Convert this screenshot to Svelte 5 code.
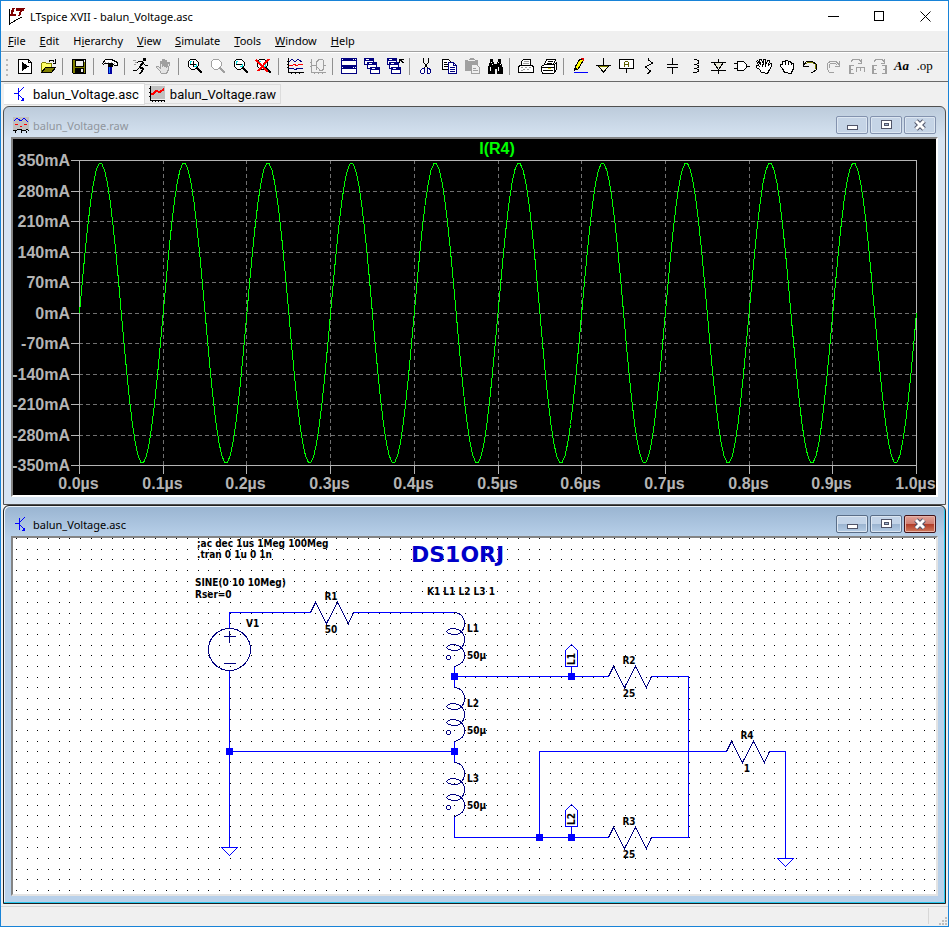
<script lang="ts">
	interface Shape {
		d: string;
		fill?: string;
		stroke?: string;
		width?: number;
	}

	interface Tool {
		name: string;
		shapes?: Shape[];
		text?: string;
		disabled?: boolean;
	}

	const K = '#000';
	const G = '#a0a0a0';
	const N = '#000080';

	const line = (d: string, stroke = K, width = 1): Shape => ({ d, stroke, width });
	const area = (d: string, fill: string, stroke = 'none'): Shape => ({ d, fill, stroke });

	const lens = (color: string, glass: string): Shape[] => [
		area('M6 3h4l3 3v4l-3 3h-4l-3-3v-4z', '#fff', color),
		area('M5 5h2v1h-1v2h-1zM9 10h2v-2h1v3h-3z', glass),
		line('M12 12l5 5', color, 2)
	];

	const childWindow = (x: number, y: number): Shape[] => [
		area(`M${x}.5 ${y}.5h9v6h-9z`, '#fff', N),
		area(`M${x} ${y}h10v3h-10z`, N),
		area(`M${x + 2} ${y + 1}h3v1h-3z`, '#fff')
	];

	const toolGroups: Tool[][] = [
		[
			{
				name: 'New schematic',
				shapes: [area('M3.5 3.5h10l3 3v11h-13z', '#fff', K), line('M13.5 3.5v3h3'), area('M7 6l7 4.5-7 4.5z', K)]
			},
			{
				name: 'Open',
				shapes: [
					area('M3.5 16.5v-9l1-1h3l1 1h5v4', '#ffff66', '#808000'),
					area('M3.5 16.5l4-5h10l-4 5z', '#808000', K),
					line('M11 5.5l1-1h3l1.5 2M17.5 3v4h-3')
				]
			}
		],
		[
			{
				name: 'Save',
				shapes: [
					area('M3.5 3.5h13v14h-12l-1-1z', '#808000', K),
					area('M6 4h8v6h-8z', '#efefef', K),
					area('M6 12h9v5h-9z', K),
					area('M12 13h2v3h-2zM15 4h1v2h-1z', '#efefef')
				]
			}
		],
		[
			{
				name: 'Control panel',
				shapes: [
					area('M2.5 7.5l3-4h6l6 3v3h-3l-2-2h-8l-1 1z', '#fff', K),
					area('M5 6h1v1h-1zM8 6h1v1h-1zM11 6h1v1h-1zM14 7h1v1h-1z', G),
					area('M8 8h5v3h-5z', K),
					area('M8 11h4v7h-4z', '#0000a0'),
					line('M9.5 11v6', '#1080ff')
				]
			}
		],
		[
			{
				name: 'Run',
				shapes: [
					area('M12 2h3v3h-3z', K),
					line('M12 6l-3 5 3 2-2 4', K, 2),
					line('M12 6l-4-1-2 2M12 7l2 2h3M9 11l-3 3h-4M10 17h-2'),
					line('M2 4.5h3M4 6.5h2M3 8.5h2', G)
				]
			},
			{
				name: 'Halt',
				disabled: true,
				shapes: [
					area('M7.5 17.5l-2-3-3-3v-1h2l2 2v-7h1l1 5v-7h2v7l1-6h1v7l2-5h1l-1 7-2 4z', '#e4e4e4', G),
					line('M9.5 4v6M11.5 5v6M13.5 6v5', G)
				]
			}
		],
		[
			{ name: 'Zoom area', shapes: [...lens(K, '#00e0e0'), line('M5 8h6M8 5v6')] },
			{ name: 'Pan', disabled: true, shapes: lens(G, '#fff') },
			{ name: 'Zoom back', shapes: [...lens(K, '#00e0e0'), line('M5 8h6')] },
			{
				name: 'Zoom to fit',
				shapes: [...lens(K, '#00e0e0'), line('M2 4l12 12M15 3l-11 12', '#f00', 2)]
			}
		],
		[
			{
				name: 'Autorange',
				shapes: [
					line('M3.5 2v14h15M2 5.5h2M2 8.5h2M2 11.5h2M6.5 16v2M10.5 16v2M14.5 16v2'),
					line('M4 6l3-3 3 3 3-3 4 3', N),
					line('M4 9.5h3l2-1 3 1 2-1h4', '#f00'),
					line('M4 12.5h4l2 1 3-1h5', N)
				]
			},
			{
				name: 'Pick visible traces',
				disabled: true,
				shapes: [
					line('M3.5 3v13h14M2 6.5h2M2 10.5h2M6.5 16v2M10.5 16v2M14.5 16v2', G),
					line('M4 9h5M8.5 14v-8l3-3h3l1 2v8l-1 1h-3l-2-3M15 9h3', G)
				]
			}
		],
		[
			{
				name: 'Tile windows',
				shapes: [
					area('M2.5 2.5h15v7h-15zM2.5 10.5h15v7h-15z', '#fff', N),
					area('M2 2h16v3h-16zM2 10h16v3h-16z', N),
					area('M3 3h1v1h-1zM14 3h1v1h-1zM16 3h1v1h-1zM3 11h1v1h-1zM14 11h1v1h-1zM16 11h1v1h-1z', '#fff')
				]
			},
			{ name: 'Cascade windows', shapes: [...childWindow(2, 2), ...childWindow(5, 6), ...childWindow(8, 11)] },
			{
				name: 'Close all windows',
				shapes: [...childWindow(2, 2), ...childWindow(4, 6), ...childWindow(6, 11), line('M14.5 7v-4h4M14.5 3l4 4')]
			}
		],
		[
			{
				name: 'Cut',
				shapes: [
					line('M7.5 2v4l4 6M12.5 2v4l-4 6'),
					area('M6.5 12.5h2v4l-1 1h-2l-1-1v-2zM11.5 12.5h2l1 2v2l-1 1h-2z', '#fff', N)
				]
			},
			{
				name: 'Copy',
				shapes: [
					area('M3.5 3.5h6l2 2v8h-8z', '#fff', K),
					line('M5 6.5h3M5 8.5h4M5 10.5h4'),
					area('M9.5 6.5h5l3 3v8h-8z', '#fff', N),
					line('M14.5 6.5v3h3M11 11.5h5M11 13.5h5M11 15.5h5', N)
				]
			},
			{
				name: 'Paste',
				disabled: true,
				shapes: [
					area('M3 4h4l1-2h4l1 2h3v11h-13z', G),
					area('M6 4h7v1h-7z', '#efefef'),
					area('M9.5 8.5h5l3 3v6h-8z', '#efefef', G),
					line('M11 12.5h3M11 14.5h5', G)
				]
			},
			{
				name: 'Find',
				shapes: [
					area('M5 3h3v3h1v2h3v-2h1v-3h3v3l2 6v6h-6v-5h-2v5h-7v-6l2-6z', K),
					area('M6 6h1v1h-1zM13 6h1v1h-1zM5 11h1v4h-1zM13 11h1v4h-1zM7 8h1v1h-1zM15 8h1v1h-1z', '#fff')
				]
			}
		],
		[
			{
				name: 'Print setup',
				shapes: [
					area('M5.5 9.5v-4l2-2h7v6', '#fff', K),
					area('M3.5 9.5h13l1 2v5h-15v-5z', '#fff', K),
					line('M8 5.5h5M7 7.5h6', G),
					area('M5 11h2v1h-2zM9 11h2v1h-2zM13 11h2v1h-2zM7 13h2v1h-2zM11 13h2v1h-2zM5 14h2v1h-2z', G)
				]
			},
			{
				name: 'Print',
				shapes: [
					area('M5.5 8.5l2-5h9l-2 5z', '#fff', K),
					area('M2.5 10.5l3-2h10l2-2v7l-3 4h-11l-1-3z', '#fff', K),
					line('M9 5.5h5M8 7.5h5M3 11.5h12M4 14.5h10M15.5 9v8'),
					area('M9 12h3v1h-3z', '#e0e000')
				]
			}
		],
		[
			{
				name: 'Draw wire',
				shapes: [
					area('M5 11l5-8h3v2l-5 8h-3z', '#ff0', K),
					area('M11 2h3v3l-2-1z', '#d00'),
					area('M4 12h3l-3 4z', K),
					line('M4 16.5h14', '#00f')
				]
			},
			{
				name: 'Place ground',
				shapes: [line('M10.5 2v7M3 9.5h15'), area('M5.5 10.5h10l-5 5z', '#ffffe0', '#808000'), line('M5 10l5.5 6 5.5-6')]
			},
			{
				name: 'Label net',
				shapes: [
					area('M3.5 3.5h14v9h-14z', '#fff', K),
					line('M10.5 13v4'),
					line('M8.5 11v-4l1-2h2l1 2v4M8.5 8.5h4', '#606000')
				]
			},
			{ name: 'Place resistor', shapes: [line('M9.5 2v2l4 3-7 4 5 4-3 3')] },
			{ name: 'Place capacitor', shapes: [line('M10.5 2v6M10.5 12v6M5 8.5h11M5 11.5h11')] },
			{ name: 'Place inductor', shapes: [line('M9 3.5h2l2 1v3l-2 1h-2h2l2 1v2l-2 1h-2h2l2 1v2l-2 1h-3')] },
			{
				name: 'Place diode',
				shapes: [
					line('M10.5 3v15M3 6.5h15M3 14.5h15'),
					area('M5.5 6.5h10l-5 7z', '#e8e8d8', K)
				]
			},
			{
				name: 'Place component',
				shapes: [area('M6.5 5.5h6l3 3v3l-3 3h-6z', '#fff', K), line('M3 7.5h3M3 12.5h3M16 10.5h3')]
			},
			{
				name: 'Move',
				shapes: [
					area('M7.5 16.5l-2-3-3-2v-2h2l1 1-3-5 1-1 3 4-1-5h2l2 5v-5h2v6l2-5h2l-1 5 2-2h1v3l-3 5-1 2z', '#fff', K),
					line('M8.5 8v3M11.5 8v3')
				]
			},
			{
				name: 'Drag',
				shapes: [
					area('M7.5 16.5l-2-4-2-2v-2h2v-3h2l1 1v-2h2l1 1 2 0 1 2h2v5l-2 4v1z', '#fff', K),
					line('M8.5 6v3M11.5 6v3M14.5 7v2')
				]
			},
			{
				name: 'Undo',
				shapes: [line('M6 8l2-2h4l3 2 1 2-1 3', '#808000'), line('M3.5 5v5h5M4 9l3-4h5l4 3 1 2-1 4-3 2h-2')]
			},
			{ name: 'Redo', disabled: true, shapes: [line('M16.5 5v5h-5M16 9l-3-4h-5l-4 3v4l2 4h5M14 9l-2-2h-4l-2 2v3', G)] },
			{
				name: 'Rotate',
				disabled: true,
				shapes: [
					line('M5 6l2-3h6l2 3M15.5 3v4h-4', G),
					line('M3.5 9v9M3 9.5h5M3 13.5h4M3 17.5h5M10 11.5h9M10.5 11v5M14.5 11v4M18.5 11v5M4.5 9v9', G)
				]
			},
			{
				name: 'Mirror',
				disabled: true,
				shapes: [
					line('M5 6l2-3h6l2 3M15.5 3v4h-4', G),
					line('M3.5 9v9M3 9.5h5M3 13.5h4M3 17.5h5M17.5 9v9M13 9.5h5M14 13.5h4M13 17.5h5M4.5 9v9M16.5 9v9', G)
				]
			},
			{ name: 'Text', text: 'Aa' },
			{ name: 'SPICE directive', text: '.op' }
		]
	];

	const menus = [
		['', 'F', 'ile'],
		['', 'E', 'dit'],
		['H', 'i', 'erarchy'],
		['', 'V', 'iew'],
		['', 'S', 'imulate'],
		['', 'T', 'ools'],
		['', 'W', 'indow'],
		['', 'H', 'elp']
	];

	let activeTab = $state('asc');

	// Waveform pane
	const plot = { left: 79, right: 916, top: 160, bottom: 465 };
	const divisions = Array.from({ length: 11 }, (_, i) => i);
	const gridX = (i: number) => Math.round(plot.left + (i * (plot.right - plot.left)) / 10) + 0.5;
	const gridY = (i: number) => Math.round(plot.top + (i * (plot.bottom - plot.top)) / 10) + 0.5;

	const trace = Array.from({ length: 301 }, (_, i) => {
		const t = i / 300;
		const x = plot.left + t * (plot.right - plot.left) + 0.5;
		const y = 313 - 150 * Math.sin(t * 20 * Math.PI);
		return `${x.toFixed(1)},${y.toFixed(1)}`;
	}).join(' ');

	// Schematic pane
	let dots = '';
	for (let row = 0; row < 34; row++) {
		for (let col = 0; col < 87; col++) {
			dots += `M${Math.round(16 + col * 10.68)} ${Math.round(538 + row * 10.67)}h1v1h-1z`;
		}
	}

	const resistors = [
		{ x: 310, y: 612, name: 'R1', value: '50' },
		{ x: 608, y: 676, name: 'R2', value: '25' },
		{ x: 608, y: 837, name: 'R3', value: '25' },
		{ x: 726, y: 751, name: 'R4', value: '1' }
	];

	const inductors = [
		{ y: 612, name: 'L1' },
		{ y: 687, name: 'L2' },
		{ y: 762, name: 'L3' }
	];

	const netLabels = [
		{ y: 644, name: 'L1' },
		{ y: 804, name: 'L2' }
	];

	const junctions = [
		[454, 676],
		[571, 676],
		[229, 751],
		[454, 751],
		[539, 837],
		[571, 837]
	];

	const notes = [
		{ x: 197, y: 547, text: ';ac dec 1us 1Meg 100Meg' },
		{ x: 197, y: 558, text: '.tran 0 1u 0 1n' },
		{ x: 195, y: 586, text: 'SINE(0 10 10Meg)' },
		{ x: 195, y: 598, text: 'Rser=0' },
		{ x: 246, y: 627, text: 'V1' },
		{ x: 427, y: 595, text: 'K1 L1 L2 L3 1' }
	];
</script>

{#snippet transistorIcon()}
	<svg class="icon" width="16" height="16" viewBox="0 0 16 16" aria-hidden="true">
		<path d="M2 7.5h4M6 2v12M7 6l5-5M7 9l4 4" fill="none" stroke="#00f" />
		<path d="M12 11v4h-4z" fill="#00f" />
	</svg>
{/snippet}

{#snippet waveIcon()}
	<svg class="icon" width="16" height="16" viewBox="0 0 16 16" aria-hidden="true">
		<path d="M0 0h16v13h-16z" fill="#c0c0c0" />
		<path d="M1 4l3-3 4 3 3-3 4 4" fill="none" stroke="#00f" />
		<path d="M2 7.5h3M7 9.5h2M11 7.5h3" fill="none" stroke="#f00" />
		<path d="M0 13.5h3l2-1h3l1 1h3l2-1 2 1M2.5 14v2M8.5 14v2M13.5 14v2" fill="none" stroke="#000" />
	</svg>
{/snippet}

{#snippet windowButtons(active: boolean)}
	<div class="child-buttons" class:active>
		<button aria-label="Minimize">
			<svg width="14" height="12" viewBox="0 0 14 12"><path d="M2.5 6.5h10v4h-10z" fill="#fff" stroke="#505468" /></svg>
		</button>
		<button aria-label="Maximize">
			<svg width="14" height="12" viewBox="0 0 14 12">
				<path d="M2.5 1.5h10v8h-10z" fill="#fff" stroke="#505468" />
				<path d="M5.5 4.5h4v2h-4z" fill="#9fb5cf" stroke="#505468" />
			</svg>
		</button>
		<button class="child-close" aria-label="Close">
			<svg class="smooth" width="14" height="12" viewBox="0 0 14 12">
				<path d="M3 2l8 8M11 2l-8 8" fill="none" stroke="#505468" stroke-width="5" />
				<path d="M3 2l8 8M11 2l-8 8" fill="none" stroke="#fff" stroke-width="3" />
			</svg>
		</button>
	</div>
{/snippet}

<div class="app">
	<header class="titlebar">
		<svg class="icon" width="18" height="18" viewBox="0 0 18 18" aria-hidden="true">
			<path d="M1.5 1.5h15l-4 8-9 7h-2z" fill="#fff" />
			<path d="M1.5 2v15l12-7" fill="none" stroke="#000" />
			<path d="M4 1h3l-2 6h3v2h-6zM8 1h9l-1 3h-2l-2 5h-2l2-5h-4z" fill="#800000" />
		</svg>
		<h1>LTspice XVII - balun_Voltage.asc</h1>
		<div class="caption-buttons">
			<button aria-label="Minimize">
				<svg width="11" height="11" viewBox="0 0 11 11"><path d="M0 5.5h11" stroke="#000" /></svg>
			</button>
			<button aria-label="Maximize">
				<svg width="11" height="11" viewBox="0 0 11 11"><path d="M.5.5h9v9h-9z" fill="none" stroke="#000" /></svg>
			</button>
			<button aria-label="Close">
				<svg class="smooth" width="11" height="11" viewBox="0 0 11 11">
					<path d="M.5.5l10 10M10.5.5l-10 10" stroke="#000" />
				</svg>
			</button>
		</div>
	</header>

	<nav class="menubar">
		{#each menus as [before, key, after]}
			<button>{before}<u>{key}</u>{after}</button>
		{/each}
	</nav>

	<div class="toolbar" role="toolbar" aria-label="Schematic tools">
		{#each toolGroups as group}
			<div class="tool-group">
				{#each group as tool (tool.name)}
					<button title={tool.name} aria-label={tool.name} disabled={tool.disabled}>
						{#if tool.text}
							<span class:script={tool.text === 'Aa'}>{tool.text}</span>
						{:else}
							<svg width="20" height="20" viewBox="0 0 20 20">
								{#each tool.shapes ?? [] as s}
									<path d={s.d} fill={s.fill ?? 'none'} stroke={s.stroke ?? 'none'} stroke-width={s.width ?? 1} />
								{/each}
							</svg>
						{/if}
					</button>
				{/each}
			</div>
		{/each}
	</div>

	<div class="tabs" role="tablist">
		<button role="tab" aria-selected={activeTab === 'asc'} onclick={() => (activeTab = 'asc')}>
			{@render transistorIcon()}
			balun_Voltage.asc
		</button>
		<button role="tab" aria-selected={activeTab === 'raw'} onclick={() => (activeTab = 'raw')}>
			<svg class="icon" width="16" height="16" viewBox="0 0 16 16" aria-hidden="true">
				<path d="M2 0h14v13h-14z" fill="#c0c0c0" />
				<path d="M1 0v14h15M0 2.5h2M0 6.5h2M0 10.5h2M3.5 14v2M6.5 14v2M9.5 14v2M12.5 14v2M15.5 14v2" fill="none" stroke="#000" />
				<path d="M2 8h2l3-3 4 1 4-3" fill="none" stroke="#f00" stroke-width="2" />
			</svg>
			balun_Voltage.raw
		</button>
	</div>

	<main class="workspace">
		<section class="child">
			<div class="child-title">
				{@render waveIcon()}
				<h2>balun_Voltage.raw</h2>
				{@render windowButtons(false)}
			</div>
			<div class="view">
				<svg class="plot" viewBox="13 139 923 356" role="img" aria-label="I(R4) waveform">
					<rect x="13" y="139" width="923" height="356" fill="#000" />
					<g stroke="#707070" stroke-dasharray="4 3">
						{#each divisions.slice(1, 10) as i}
							<path d="M{gridX(i)} {plot.top}V{plot.bottom}M{plot.left} {gridY(i)}H{plot.right}" />
						{/each}
					</g>
					<g stroke="#b4b4b4" fill="none">
						<rect x={plot.left + 0.5} y={plot.top + 0.5} width={plot.right - plot.left} height={plot.bottom - plot.top} />
						{#each divisions as i}
							<path d="M{plot.left} {gridY(i)}h-8M{gridX(i)} {plot.bottom}v9" />
						{/each}
					</g>
					<polyline points={trace} fill="none" stroke="#0f0" />
					<text class="trace-name" x="497" y="154">I(R4)</text>
					{#each divisions as i}
						<text class="axis-y" x="70" y={gridY(i) + 5.5}>{350 - i * 70}mA</text>
						<text class="axis-x" x={gridX(i) - 1} y="489">{(i / 10).toFixed(1)}µs</text>
					{/each}
				</svg>
			</div>
		</section>

		<section class="child active">
			<div class="child-title">
				{@render transistorIcon()}
				<h2>balun_Voltage.asc</h2>
				{@render windowButtons(true)}
			</div>
			<div class="view">
				<svg class="schematic" viewBox="13 538 923 356" role="img" aria-label="Balun schematic">
					<path d={dots} fill="#000" />

					<g class="wires">
						<path d="M229.5 628.5v-16h81M353.5 612.5h101M229.5 671v176M229.5 751.5h225" />
						<path d="M454.5 666v21M454.5 741v21M454.5 816v21.5h154M454.5 676.5h154" />
						<path d="M651.5 676.5h37v161h-37M539.5 837.5v-86h187M769.5 751.5h16v107" />
						<path d="M221.5 847.5h16l-8 8zM777.5 858.5h16l-8 8z" />
						{#each netLabels as { y }}
							<path d="M565.5 {y + 22}.5v-16l6-6 6 6v16zM571.5 {y + 22}v10" />
						{/each}
					</g>

					<g class="symbols">
						<circle cx="229.5" cy="649.5" r="21" />
						<path d="M223.5 636.5h12M229.5 630.5v12M223.5 663.5h12" />
						{#each resistors as { x, y }}
							<path d="M{x}.5 {y}.5l5-10 11 21 11-21 11 21 5-11" />
						{/each}
						{#each inductors as { y }}
							<g transform="translate(454 {y})">
								<path
									d="M.5.5C7 1 10.5 5 10.5 12C10.5 18 6 23 .5 22.5C-4 22-7 21-7.5 19.5C-6 17-2 16 .5 16.5C6 17 10.5 21 10.5 28C10.5 34 6 39 .5 38.5C-4 38-7 37-7.5 35.5C-6 33-3 32.5 .5 32.5C6 33 10.5 37 10.5 44C10.5 50 6 53 .5 54.5"
								/>
								<circle cx="-5.5" cy="45.5" r="2" />
							</g>
						{/each}
					</g>

					{#each junctions as [x, y]}
						<rect x={x - 3} y={y - 3} width="7" height="7" fill="#00f" />
					{/each}

					<text class="callsign" x="411" y="562">DS1ORJ</text>
					{#each notes as note}
						<text x={note.x} y={note.y}>{note.text}</text>
					{/each}
					{#each resistors as r}
						<text class="middle" x={r.x + 21} y={r.y - 12}>{r.name}</text>
						<text class="middle" x={r.x + 21} y={r.y + 21}>{r.value}</text>
					{/each}
					{#each inductors as l}
						<text x="467" y={l.y + 20}>{l.name}</text>
						<text x="467" y={l.y + 47}>50µ</text>
					{/each}
					{#each netLabels as label}
						<text transform="translate(575 {label.y + 21}) rotate(-90)">{label.name}</text>
					{/each}
				</svg>
			</div>
		</section>
	</main>

	<footer class="statusbar">
		<div class="status-pane"></div>
		<svg width="10" height="10" viewBox="0 0 10 10" aria-hidden="true">
			<path d="M7 1h2v2h-2zM4 4h2v2h-2zM7 4h2v2h-2zM1 7h2v2h-2zM4 7h2v2h-2zM7 7h2v2h-2z" fill="#bfbfbf" />
		</svg>
	</footer>
</div>

<style>
	:global(body) {
		margin: 0;
		background: #f0f0f0;
	}

	.app {
		display: flex;
		flex-direction: column;
		min-height: 100vh;
		box-sizing: border-box;
		border: 1px solid #1883d7;
		background: #f0f0f0;
		color: #000;
		font-family: 'Noto Sans', 'Open Sans', sans-serif;
		font-size: 11px;
	}

	button {
		margin: 0;
		padding: 0;
		border: 0;
		background: none;
		color: inherit;
		font: inherit;
	}

	h1,
	h2 {
		flex: 1;
		margin: 0;
		font-size: 11px;
		font-weight: 400;
	}

	svg {
		display: block;
		shape-rendering: crispEdges;
	}

	svg.smooth {
		shape-rendering: auto;
	}

	.icon {
		flex: none;
	}

	/* Title bar */
	.titlebar {
		display: flex;
		align-items: center;
		gap: 4px;
		height: 30px;
		padding-left: 7px;
		background: #fff;
	}

	.caption-buttons {
		display: flex;
		height: 100%;
	}

	.caption-buttons button {
		display: flex;
		align-items: center;
		justify-content: center;
		width: 46px;
	}

	.caption-buttons button:hover {
		background: #e5e5e5;
	}

	/* Menu */
	.menubar {
		display: flex;
		height: 20px;
		border-bottom: 1px solid #a0a0a0;
	}

	.menubar button {
		padding: 0 7px;
		line-height: 20px;
	}

	.menubar button:hover {
		background: #cce8ff;
	}

	/* Toolbar */
	.toolbar {
		display: flex;
		align-items: flex-start;
		box-sizing: border-box;
		height: 30px;
		padding: 3px 0 0 12px;
		border-top: 1px solid #fff;
		border-bottom: 1px solid #696969;
		background: repeating-linear-gradient(#b8b8b8 0 2px, transparent 2px 5px) 5px 6px / 2px 17px no-repeat;
	}

	.tool-group {
		display: flex;
		align-items: center;
	}

	.tool-group + .tool-group::before {
		content: '';
		width: 1px;
		height: 17px;
		margin: 0 4px 0 3px;
		background: #909090;
	}

	.toolbar button {
		display: flex;
		align-items: center;
		justify-content: center;
		width: 23px;
		height: 20px;
		font-family: 'Liberation Serif', serif;
		font-size: 13px;
	}

	.script {
		font-style: italic;
		font-weight: 700;
	}

	/* Document tabs */
	.tabs {
		display: flex;
		align-items: flex-start;
		height: 24px;
		padding-left: 3px;
	}

	.tabs button {
		display: flex;
		align-items: center;
		gap: 5px;
		box-sizing: border-box;
		height: 20px;
		margin-top: 2px;
		padding: 0 4px;
		border: 1px solid #dcdcdc;
		border-left: 0;
		font-family: Roboto, sans-serif;
		font-size: 13px;
	}

	.tabs button[aria-selected='true'] {
		height: 22px;
		margin-top: 1px;
		padding: 0 5px 0 8px;
		background: #fff;
	}

	/* MDI area */
	.workspace {
		flex: 1;
		padding: 0 2px;
	}

	.child {
		box-sizing: border-box;
		padding: 0 7px 7px;
		border: 1px solid #505050;
		border-radius: 6px 6px 0 0;
		background: linear-gradient(#bccbdb, #d7e4f2 32px) #d7e4f2;
	}

	.child.active {
		border-color: #202020;
		background: linear-gradient(#99b4d1, #b9d1ea 32px) #b9d1ea;
		box-shadow: inset -1px -1px #28c8f0, inset 1px 1px #eaf2fa;
	}

	.child-title {
		display: flex;
		align-items: center;
		gap: 4px;
		height: 30px;
		padding: 6px 0 0 2px;
		box-sizing: border-box;
		color: #8f959c;
	}

	.child.active .child-title {
		color: #000;
	}

	.child-buttons {
		display: flex;
		gap: 2px;
		padding-right: 2px;
	}

	.child-buttons button {
		display: flex;
		align-items: center;
		justify-content: center;
		box-sizing: border-box;
		width: 32px;
		height: 18px;
		border: 1px solid #8392ae;
		border-radius: 2px;
		background: #c5d4e6;
		box-shadow: inset 0 0 0 1px #dce6f1;
	}

	.child-buttons.active button {
		border-color: #5a6e88;
		background: linear-gradient(#c3d4e8 50%, #9ab3cf 50%, #b5cde6);
	}

	.child-buttons.active .child-close {
		border-color: #43141a;
		background: linear-gradient(#e0a298 0, #cf7d70 50%, #b03a26 50%, #d07a5c);
		box-shadow: inset 0 0 0 1px #e8b4a8;
	}

	.view {
		border: 2px solid;
		border-color: #848484 #fff #fff #848484;
		background: #fff;
	}

	.child.active .view {
		border-right-color: #e3e3e3;
		border-bottom-color: #e3e3e3;
	}

	.view svg {
		width: 100%;
		height: auto;
	}

	/* Waveform */
	.plot text {
		fill: #b4b4b4;
		font-family: 'Liberation Sans', Arial, sans-serif;
		font-size: 16px;
		font-weight: 700;
	}

	.plot .trace-name {
		fill: #0f0;
		text-anchor: middle;
	}

	.axis-y {
		text-anchor: end;
	}

	.axis-x {
		text-anchor: middle;
	}

	/* Schematic */
	.wires {
		fill: none;
		stroke: #00f;
	}

	.symbols {
		fill: none;
		stroke: #000080;
	}

	.schematic text {
		font-family: 'DejaVu Sans Condensed', 'DejaVu Sans', sans-serif;
		font-size: 10px;
		font-weight: 700;
	}

	.schematic .callsign {
		fill: #0000c8;
		font-family: 'DejaVu Sans', sans-serif;
		font-size: 22px;
	}

	.middle {
		text-anchor: middle;
	}

	/* Status bar */
	.statusbar {
		display: flex;
		align-items: flex-end;
		height: 19px;
		border-top: 1px solid #d7d7d7;
	}

	.status-pane {
		flex: 1;
		height: 16px;
		margin: 0 9px 2px 0;
		border-right: 1px solid #d7d7d7;
	}
</style>
